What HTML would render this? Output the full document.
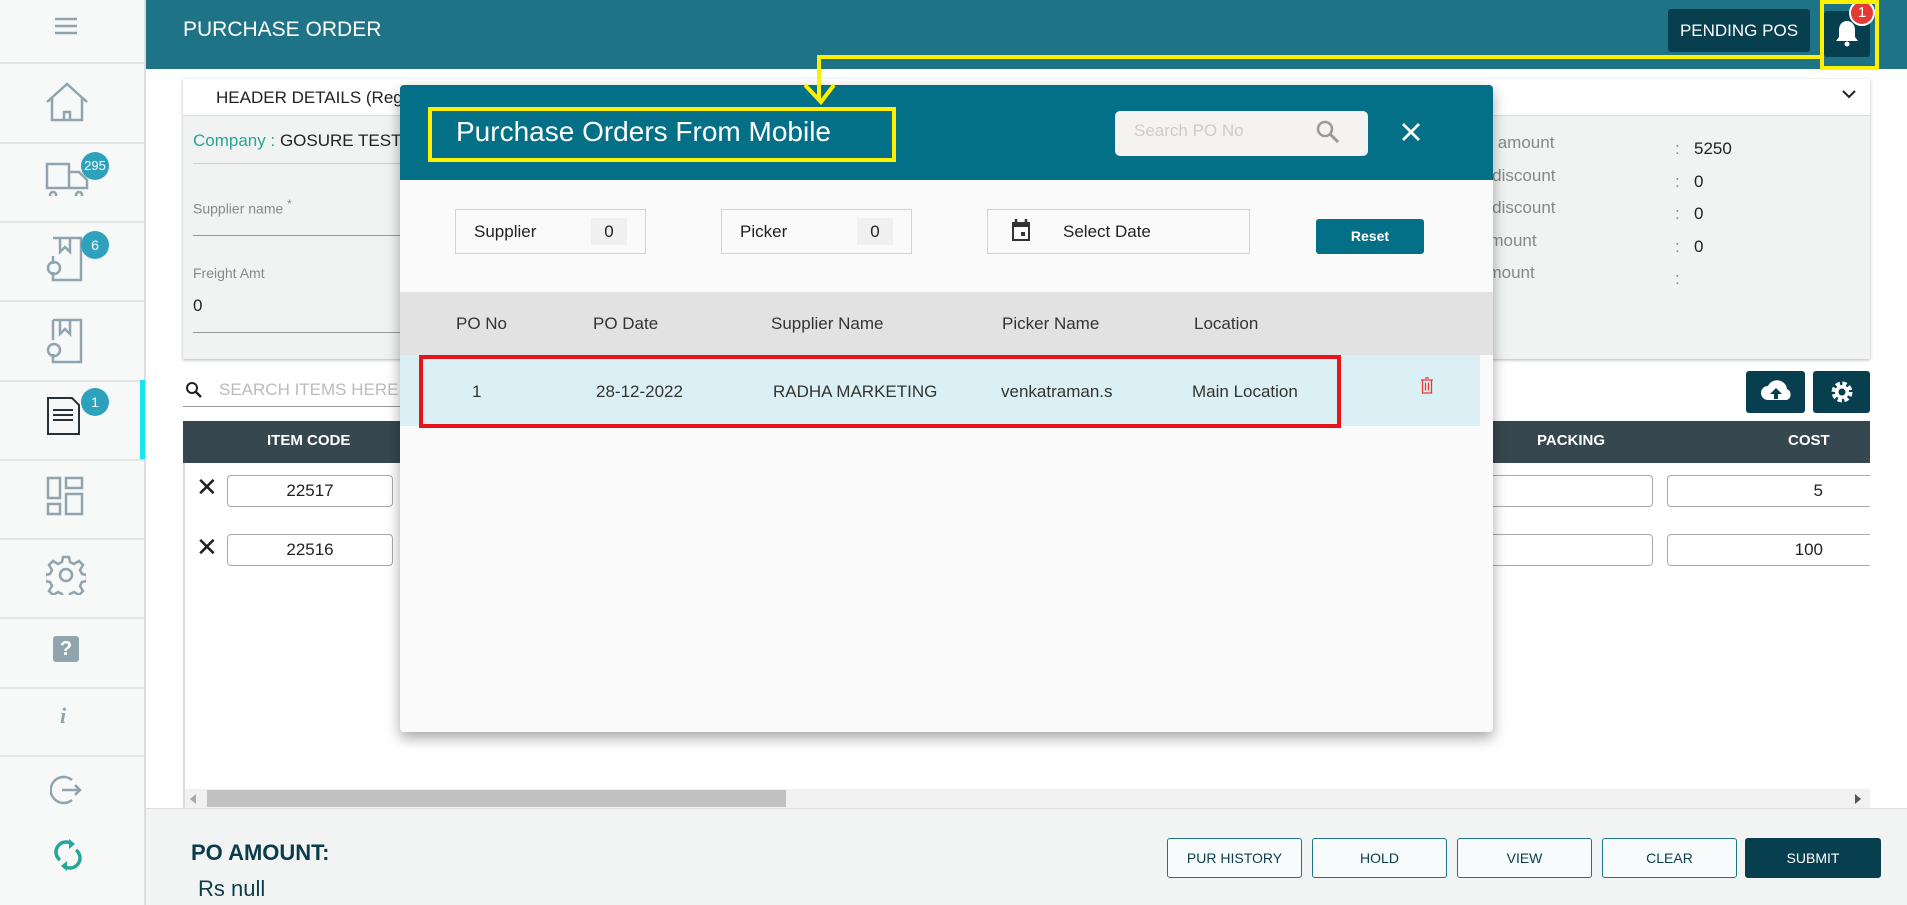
<!DOCTYPE html>
<html><head><meta charset="utf-8"><style>
*{box-sizing:border-box;margin:0;padding:0}
body{width:1907px;height:905px;position:relative;overflow:hidden;font-family:"Liberation Sans",sans-serif;background:#fff;color:#222}
.a{position:absolute}
.sb{left:0;top:0;width:146px;height:905px;background:#f7f8f8;border-right:2px solid #ddd}
.sep{left:0;width:144px;height:2px;background:#e3e5e5}
.ic{stroke:#90a4ae;fill:none;stroke-width:2.5}
.badge{width:28px;height:28px;border-radius:50%;background:#2ea2bd;color:#fff;font-size:14px;text-align:center;line-height:28px}
.lbl{font-size:15px;color:#888}
.t16{font-size:17px}
.btn{border:1.5px solid #1e7387;border-radius:3px;background:#f8fbfb;color:#0b3c4a;font-size:14px;text-align:center;line-height:38px}
</style></head><body>
<!-- sidebar -->
<div class="a sb"></div>
<svg class="a" style="left:54px;top:17px" width="24" height="18"><path d="M1 2h22M1 9h22M1 16h22" stroke="#90a4ae" stroke-width="2.5"/></svg>
<div class="a sep" style="top:62px"></div>
<svg class="a" style="left:45px;top:82px" width="44" height="40"><path class="ic" d="M2 20L22 2l20 18M7 16v22h30V16M19 38v-8h6v8" /></svg>
<div class="a sep" style="top:142px"></div>
<svg class="a" style="left:45px;top:162px" width="44" height="34"><path class="ic" d="M2 2h22v24H2zM24 10h10l8 8v8H24M8 30a3 3 0 1 0 .1 0M34 30a3 3 0 1 0 .1 0"/></svg>
<div class="a badge" style="left:81px;top:152px;font-size:13px">295</div>
<div class="a sep" style="top:221px"></div>
<svg class="a" style="left:46px;top:236px" width="40" height="46"><path class="ic" d="M7 2h28v42H7v-8M14 2v14l5-5 5 5V2M7 20v8"/><circle class="ic" cx="8" cy="32" r="6"/></svg>
<div class="a badge" style="left:81px;top:231px">6</div>
<div class="a sep" style="top:300px"></div>
<svg class="a" style="left:46px;top:318px" width="40" height="46"><path class="ic" d="M7 2h28v42H7v-8M14 2v14l5-5 5 5V2M7 2v20"/><circle class="ic" cx="8" cy="32" r="6"/></svg>
<div class="a sep" style="top:380px"></div>
<div class="a" style="left:140px;top:380px;width:5px;height:79px;background:#18e5f0"></div>
<svg class="a" style="left:46px;top:396px" width="36" height="40"><path d="M2 2h24l7 7v29H2zM7 14h20M7 19h20M7 24h20" stroke="#263238" stroke-width="2" fill="none"/></svg>
<div class="a badge" style="left:81px;top:388px">1</div>
<div class="a sep" style="top:459px"></div>
<svg class="a" style="left:46px;top:476px" width="40" height="40"><path class="ic" d="M2 2h12v20H2zM20 2h16v10H20zM2 28h12v10H2zM20 18h16v20H20z"/></svg>
<div class="a sep" style="top:538px"></div>
<svg class="a" style="left:46px;top:555px" width="40" height="40"><circle class="ic" cx="20" cy="20" r="6"/><path class="ic" d="M17 2h6l1 5 4 2 5-3 4 4-3 5 2 4 5 1v6l-5 1-2 4 3 5-4 4-5-3-4 2-1 5h-6l-1-5-4-2-5 3-4-4 3-5-2-4-5-1v-6l5-1 2-4-3-5 4-4 5 3 4-2z"/></svg>
<div class="a sep" style="top:617px"></div>
<div class="a" style="left:53px;top:636px;width:26px;height:26px;background:#90a4ae;border-radius:3px;color:#fff;font-weight:bold;font-size:20px;text-align:center;line-height:26px">?</div>
<div class="a sep" style="top:687px"></div>
<div class="a" style="left:60px;top:703px;font-family:'Liberation Serif',serif;font-style:italic;font-weight:bold;font-size:22px;color:#90a4ae">i</div>
<div class="a sep" style="top:755px"></div>
<svg class="a" style="left:50px;top:774px" width="34" height="32"><path class="ic" d="M22 6A13 13 0 1 0 22 26M12 16h18M25 11l5 5-5 5" stroke-width="2"/></svg>
<svg class="a" style="left:54px;top:838px" width="28" height="34"><path d="M6 22A10 10 0 0 1 18 6M22 12A10 10 0 0 1 10 28" stroke="#26a69a" stroke-width="3.5" fill="none"/><path d="M15 1l6 5-6 5zM13 23l-6 5 6 5z" fill="#26a69a"/></svg>

<!-- top bar -->
<div class="a" style="left:146px;top:0;width:1761px;height:69px;background:#1e7387"></div>
<div class="a" style="left:183px;top:18px;font-size:21px;color:#fff">PURCHASE ORDER</div>
<div class="a" style="left:1668px;top:9px;width:142px;height:43px;background:#073f4f;border-radius:3px;color:#fff;font-size:17px;text-align:center;line-height:43px">PENDING POS</div>
<div class="a" style="left:1824px;top:11px;width:46px;height:46px;background:#073f4f;border-radius:3px"></div>
<svg class="a" style="left:1835px;top:19px" width="24" height="28"><path d="M12 2c5 0 8 4 8 9v7l3 4H1l3-4v-7c0-5 3-9 8-9z" fill="#fff"/><circle cx="12" cy="25" r="2.5" fill="#fff"/></svg>
<div class="a" style="left:1849px;top:0;width:26px;height:26px;border-radius:50%;background:#e53935;border:2px solid #fff;color:#fff;font-size:15px;text-align:center;line-height:22px">1</div>

<!-- header details card -->
<div class="a" style="left:183px;top:79px;width:1687px;height:280px;background:#f0f3f2;box-shadow:0 1px 3px rgba(0,0,0,.3)"></div>
<div class="a" style="left:183px;top:79px;width:1687px;height:37px;background:#fff;border-bottom:1px solid #ddd"></div>
<div class="a t16" style="left:216px;top:88px">HEADER DETAILS (Reg</div>
<svg class="a" style="left:1841px;top:88px" width="16" height="12"><path d="M2 3l6 6 6-6" stroke="#222" stroke-width="2" fill="none"/></svg>
<div class="a t16" style="left:193px;top:131px"><span style="color:#26a69a">Company : </span>GOSURE TEST</div>
<div class="a" style="left:193px;top:163px;width:210px;height:1px;background:#ccc"></div>
<div class="a" style="left:193px;top:198px;font-size:14px;color:#888">Supplier name <sup>*</sup></div>
<div class="a" style="left:193px;top:235px;width:210px;height:1px;background:#999"></div>
<div class="a" style="left:193px;top:265px;font-size:14px;color:#888">Freight Amt</div>
<div class="a t16" style="left:193px;top:296px">0</div>
<div class="a" style="left:193px;top:332px;width:210px;height:1px;background:#999"></div>
<div class="a lbl" style="left:1476px;top:133px;font-size:17px">ss amount</div>
<div class="a lbl" style="left:1478px;top:166px;font-size:17px">n discount</div>
<div class="a lbl" style="left:1478px;top:198px;font-size:17px">h discount</div>
<div class="a lbl" style="left:1478px;top:231px;font-size:17px">Amount</div>
<div class="a lbl" style="left:1478px;top:263px;font-size:17px">amount</div>
<div class="a lbl" style="left:1675px;top:133px;font-size:17px;line-height:32.5px">:<br>:<br>:<br>:<br>:</div>
<div class="a t16" style="left:1694px;top:133px;line-height:32.5px">5250<br>0<br>0<br>0</div>

<!-- search & tools -->
<svg class="a" style="left:185px;top:381px" width="18" height="18"><circle cx="7" cy="7" r="5" stroke="#222" stroke-width="2" fill="none"/><path d="M11 11l5 5" stroke="#222" stroke-width="2.5"/></svg>
<div class="a" style="left:219px;top:380px;font-size:17px;color:#bbb">SEARCH ITEMS HERE</div>
<div class="a" style="left:183px;top:406px;width:220px;height:1px;background:#999"></div>
<div class="a" style="left:1746px;top:371px;width:59px;height:42px;background:#073f4f;border-radius:3px"></div>
<svg class="a" style="left:1760px;top:378px" width="32" height="26"><path d="M8 22a7 7 0 0 1 0-14 10 10 0 0 1 19 3 6 6 0 0 1 0 11z" fill="#fff"/><path d="M16 10l-6 6h4v5h4v-5h4z" fill="#073f4f"/></svg>
<div class="a" style="left:1813px;top:371px;width:57px;height:42px;background:#073f4f;border-radius:3px"></div>
<svg class="a" style="left:1829px;top:379px" width="26" height="26"><circle cx="13" cy="13" r="8" fill="none" stroke="#fff" stroke-width="5" stroke-dasharray="4 2.3"/><circle cx="13" cy="13" r="7" fill="#fff"/><circle cx="13" cy="13" r="3.5" fill="#073f4f"/></svg>

<!-- items table -->
<div class="a" style="left:183px;top:421px;width:1687px;height:42px;background:#37474f"></div>
<div class="a" style="left:183px;top:463px;width:2px;height:345px;background:#ddd"></div>
<div class="a" style="left:267px;top:432px;font-size:15px;font-weight:bold;color:#fff">ITEM CODE</div>
<div class="a" style="left:1537px;top:432px;font-size:15px;font-weight:bold;color:#fff">PACKING</div>
<div class="a" style="left:1788px;top:432px;font-size:15px;font-weight:bold;color:#fff">COST</div>
<div class="a" style="left:196px;top:474px;font-size:26px;line-height:26px">✕</div>
<div class="a" style="left:227px;top:475px;width:166px;height:32px;border:1px solid #aaa;border-radius:4px;text-align:center;line-height:30px;font-size:17px">22517</div>
<div class="a" style="left:196px;top:534px;font-size:26px;line-height:26px">✕</div>
<div class="a" style="left:227px;top:534px;width:166px;height:32px;border:1px solid #aaa;border-radius:4px;text-align:center;line-height:30px;font-size:17px">22516</div>
<div class="a" style="left:1480px;top:475px;width:173px;height:32px;border:1px solid #aaa;border-radius:4px"></div>
<div class="a" style="left:1480px;top:534px;width:173px;height:32px;border:1px solid #aaa;border-radius:4px"></div>
<div class="a" style="left:1667px;top:475px;width:203px;height:32px;border:1px solid #aaa;border-right:none;border-radius:4px 0 0 4px;text-align:right;padding-right:47px;line-height:30px;font-size:17px">5</div>
<div class="a" style="left:1667px;top:534px;width:203px;height:32px;border:1px solid #aaa;border-right:none;border-radius:4px 0 0 4px;text-align:right;padding-right:47px;line-height:30px;font-size:17px">100</div>
<div class="a" style="left:185px;top:789px;width:1685px;height:19px;background:#f1f1f1"></div>
<div class="a" style="left:207px;top:790px;width:579px;height:17px;background:#c1c1c1"></div>
<svg class="a" style="left:190px;top:794px" width="8" height="10"><path d="M6 0v10L0 5z" fill="#aaa"/></svg>
<svg class="a" style="left:1853px;top:794px" width="8" height="10"><path d="M2 0v10l6-5z" fill="#555"/></svg>

<!-- footer -->
<div class="a" style="left:146px;top:808px;width:1761px;height:97px;background:#f1f4f3;border-top:1px solid #ddd"></div>
<div class="a" style="left:191px;top:840px;font-size:22px;font-weight:bold;color:#0b3c4a">PO AMOUNT:</div>
<div class="a" style="left:198px;top:876px;font-size:22px;color:#0b3c4a">Rs null</div>
<div class="a btn" style="left:1167px;top:838px;width:135px;height:40px">PUR HISTORY</div>
<div class="a btn" style="left:1312px;top:838px;width:135px;height:40px">HOLD</div>
<div class="a btn" style="left:1457px;top:838px;width:135px;height:40px">VIEW</div>
<div class="a btn" style="left:1602px;top:838px;width:135px;height:40px">CLEAR</div>
<div class="a btn" style="left:1745px;top:838px;width:136px;height:40px;background:#073f4f;color:#fff;border-color:#073f4f">SUBMIT</div>

<!-- modal -->
<div class="a" style="left:400px;top:85px;width:1093px;height:647px;background:#fafafa;border-radius:4px;box-shadow:0 6px 14px rgba(0,0,0,.35)"></div>
<div class="a" style="left:400px;top:85px;width:1093px;height:95px;background:#037087;border-radius:4px 4px 0 0"></div>
<div class="a" style="left:428px;top:107px;width:468px;height:55px;border:4px solid #ffef00"></div>
<div class="a" style="left:456px;top:116px;font-size:28px;color:#fff">Purchase Orders From Mobile</div>
<div class="a" style="left:1115px;top:111px;width:253px;height:45px;background:#f5f2f2;border-radius:5px"></div>
<div class="a" style="left:1134px;top:121px;font-size:17px;color:#ccc">Search PO No</div>
<svg class="a" style="left:1316px;top:120px" width="24" height="24"><circle cx="9" cy="9" r="7" stroke="#999" stroke-width="2.5" fill="none"/><path d="M14 14l8 8" stroke="#999" stroke-width="3"/></svg>
<svg class="a" style="left:1401px;top:122px" width="20" height="20"><path d="M2 2l16 16M18 2L2 18" stroke="#fff" stroke-width="2.8"/></svg>
<div class="a" style="left:455px;top:209px;width:191px;height:45px;border:1px solid #d8d0d0"></div>
<div class="a t16" style="left:474px;top:222px">Supplier</div>
<div class="a" style="left:591px;top:218px;width:36px;height:27px;background:#f0f0f0;text-align:center;line-height:27px;font-size:17px">0</div>
<div class="a" style="left:721px;top:209px;width:191px;height:45px;border:1px solid #d8d0d0"></div>
<div class="a t16" style="left:740px;top:222px">Picker</div>
<div class="a" style="left:857px;top:218px;width:36px;height:27px;background:#f0f0f0;text-align:center;line-height:27px;font-size:17px">0</div>
<div class="a" style="left:987px;top:209px;width:263px;height:45px;border:1px solid #d8d0d0"></div>
<svg class="a" style="left:1010px;top:217px" width="22" height="26"><path d="M2 5h18v19H2z" fill="#333"/><rect x="4" y="10" width="14" height="12" fill="#fafafa"/><rect x="11" y="15" width="4" height="4" fill="#333"/><path d="M6 2v5M16 2v5" stroke="#333" stroke-width="2.5"/></svg>
<div class="a t16" style="left:1063px;top:222px">Select Date</div>
<div class="a" style="left:1316px;top:219px;width:108px;height:35px;background:#037087;border-radius:3px;color:#fff;font-size:14px;font-weight:bold;text-align:center;line-height:35px">Reset</div>
<div class="a" style="left:400px;top:292px;width:1093px;height:63px;background:#e2e2e2"></div>
<div class="a t16" style="left:456px;top:314px;color:#333">PO No</div>
<div class="a t16" style="left:593px;top:314px;color:#333">PO Date</div>
<div class="a t16" style="left:771px;top:314px;color:#333">Supplier Name</div>
<div class="a t16" style="left:1002px;top:314px;color:#333">Picker Name</div>
<div class="a t16" style="left:1194px;top:314px;color:#333">Location</div>
<div class="a" style="left:400px;top:355px;width:1080px;height:71px;background:#daf0f4"></div>
<div class="a" style="left:419px;top:355px;width:922px;height:73px;border:4px solid #e8141c"></div>
<div class="a t16" style="left:472px;top:382px;color:#333">1</div>
<div class="a t16" style="left:596px;top:382px;color:#333">28-12-2022</div>
<div class="a t16" style="left:773px;top:382px;color:#333">RADHA MARKETING</div>
<div class="a t16" style="left:1001px;top:382px;color:#333">venkatraman.s</div>
<div class="a t16" style="left:1192px;top:382px;color:#333">Main Location</div>
<svg class="a" style="left:1420px;top:377px" width="14" height="17"><path d="M1 3h12M5 1h4M2.5 3v13h9V3M5.5 5.5v8M8.5 5.5v8" stroke="#e53935" stroke-width="1.3" fill="none"/></svg>

<!-- yellow annotations (on top) -->
<div class="a" style="left:1820px;top:0;width:59px;height:70px;border:4px solid #ffef00"></div>
<div class="a" style="left:817px;top:55px;width:1005px;height:4px;background:#ffef00"></div>
<div class="a" style="left:817px;top:55px;width:4px;height:46px;background:#ffef00"></div>
<svg class="a" style="left:802px;top:82px" width="34" height="24"><path d="M3 3l16 17 13-17" stroke="#ffef00" stroke-width="4" fill="none"/></svg>
</body></html>
